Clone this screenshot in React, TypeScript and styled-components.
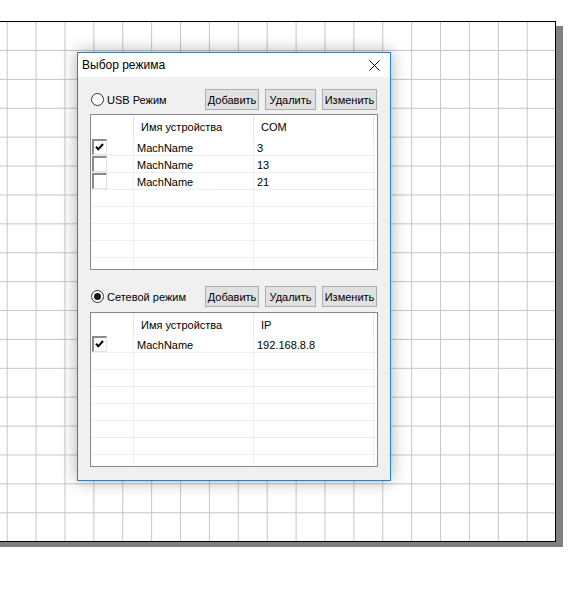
import React from 'react';
import styled, { createGlobalStyle } from 'styled-components';

const GlobalStyle = createGlobalStyle`
  html, body {
    margin: 0;
    padding: 0;
    background: #ffffff;
  }
  body {
    font-family: "Liberation Sans", Arial, sans-serif;
    font-size: 11px;
    color: #000;
  }
  * {
    box-sizing: border-box;
  }
`;

const Page = styled.div`
  width: 569px;
  height: 603px;
  padding-top: 21px;
  overflow: hidden;
`;

const Canvas = styled.div`
  position: relative;
  margin-left: -10px;
  width: 566px;
  height: 521px;
  border: 1px solid #000;
  box-shadow: 7px 5px 0 #808080;
  background-color: #fff;
  background-image:
    linear-gradient(to right, #c6c6c6 1px, transparent 1px),
    linear-gradient(to bottom, #c6c6c6 1px, transparent 1px);
  background-size: 28.9px 28.9px;
  background-position: 15.7px 28px;
`;

const Dialog = styled.div`
  position: absolute;
  left: 86px;
  top: 30px;
  width: 314px;
  height: 429px;
  display: flex;
  flex-direction: column;
  border: 1px solid #1b84d7;
  background: #f0f0f0;
  box-shadow: 0 0 16px rgba(0, 0, 0, 0.32);
`;

const TitleBar = styled.div`
  height: 24px;
  display: flex;
  align-items: center;
  justify-content: space-between;
  padding: 0 10px 0 4px;
  background: #fff;
`;

const Title = styled.span`
  font-size: 12px;
  color: #000;
`;

const CloseButton = styled.span`
  display: flex;
  width: 12px;
  height: 12px;
  align-items: center;
  justify-content: center;
`;

const Body = styled.div`
  flex: 1;
  display: flex;
  flex-direction: column;
  gap: 16px;
  padding: 12px 12px 13px 12px;
`;

const Section = styled.div<{ $gap: number }>`
  display: flex;
  flex-direction: column;
  gap: ${(p) => p.$gap}px;
`;

const ModeRow = styled.div`
  height: 21px;
  display: flex;
  align-items: center;
  justify-content: space-between;
  padding-right: 1px;
`;

const RadioLabel = styled.label`
  display: flex;
  align-items: center;
  gap: 3px;
  padding-left: 1px;
`;

const Radio = styled.span<{ $checked: boolean }>`
  width: 13px;
  height: 13px;
  border-radius: 50%;
  border: 1px solid #333;
  background: #fff;
  display: flex;
  align-items: center;
  justify-content: center;

  &::after {
    content: '';
    display: ${(p) => (p.$checked ? 'block' : 'none')};
    width: 7px;
    height: 7px;
    border-radius: 50%;
    background: #1a1a1a;
  }
`;

const ButtonGroup = styled.div`
  display: flex;
  gap: 6px;
`;

const Button = styled.button<{ $w: number }>`
  width: ${(p) => p.$w}px;
  height: 21px;
  padding: 0;
  border: 1px solid #adadad;
  background: #e1e1e1;
  font-family: "Liberation Sans", Arial, sans-serif;
  font-size: 11px;
  color: #000;
`;

const ListView = styled.div<{ $h: number }>`
  height: ${(p) => p.$h}px;
  border: 1px solid #828790;
  background: #fff;
  overflow: hidden;
`;

const columns = '43px 120px 120px 1fr';

const HeaderRow = styled.div<{ $h: number }>`
  height: ${(p) => p.$h}px;
  display: grid;
  grid-template-columns: ${columns};
`;

const HeaderCell = styled.div`
  display: flex;
  align-items: center;
  padding-left: 7px;
  border-right: 1px solid #e5e5e5;
  &:last-child {
    border-right: none;
  }
`;

const Row = styled.div`
  height: 17px;
  display: grid;
  grid-template-columns: ${columns};
  border-bottom: 1px solid #efefef;
`;

const Cell = styled.div`
  display: flex;
  align-items: center;
  padding: 1px 0 0 3px;
  border-right: 1px solid #efefef;
  white-space: nowrap;
  &:last-child {
    border-right: none;
  }
`;

const CheckCell = styled.div`
  display: flex;
  align-items: center;
  padding-left: 1px;
  border-right: 1px solid #efefef;
`;

const CheckBox = styled.span`
  width: 15px;
  height: 16px;
  background: #fff;
  border-top: 2px solid #8c8c8c;
  border-left: 2px solid #8c8c8c;
  border-right: 1px solid #e3e3e3;
  border-bottom: 1px solid #e3e3e3;
  display: flex;
  padding: 2px 0 0 1px;
`;

type Item = { checked: boolean; name: string; value: string };

const usbItems: Item[] = [
  { checked: true, name: 'MachName', value: '3' },
  { checked: false, name: 'MachName', value: '13' },
  { checked: false, name: 'MachName', value: '21' },
];

const netItems: Item[] = [{ checked: true, name: 'MachName', value: '192.168.8.8' }];

const Check = () => (
  <svg width="9" height="8" viewBox="0 0 9 8">
    <path d="M1 3.8 L3.3 6.3 L8 1" fill="none" stroke="#000" strokeWidth="2" />
  </svg>
);

function DeviceList({ items, column, height, headerHeight }: { items: Item[]; column: string; height: number; headerHeight: number }) {
  const rows: (Item | null)[] = [...items];
  while (rows.length < 8) rows.push(null);
  return (
    <ListView $h={height}>
      <HeaderRow $h={headerHeight}>
        <HeaderCell />
        <HeaderCell>Имя устройства</HeaderCell>
        <HeaderCell>{column}</HeaderCell>
        <HeaderCell />
      </HeaderRow>
      {rows.map((r, i) => (
        <Row key={i}>
          <CheckCell>{r && <CheckBox>{r.checked && <Check />}</CheckBox>}</CheckCell>
          <Cell>{r?.name}</Cell>
          <Cell>{r?.value}</Cell>
          <Cell />
        </Row>
      ))}
    </ListView>
  );
}

function ModeHeader({ label, checked }: { label: string; checked: boolean }) {
  return (
    <ModeRow>
      <RadioLabel>
        <Radio $checked={checked} />
        <span>{label}</span>
      </RadioLabel>
      <ButtonGroup>
        <Button $w={54}>Добавить</Button>
        <Button $w={51}>Удалить</Button>
        <Button $w={55}>Изменить</Button>
      </ButtonGroup>
    </ModeRow>
  );
}

export default function App() {
  return (
    <>
      <GlobalStyle />
      <Page>
        <Canvas>
          <Dialog>
            <TitleBar>
              <Title>Выбор режима</Title>
              <CloseButton>
                <svg width="11" height="11" viewBox="0 0 11 11">
                  <path d="M0.5 0.5 L10.5 10.5 M10.5 0.5 L0.5 10.5" stroke="#000" strokeWidth="1" />
                </svg>
              </CloseButton>
            </TitleBar>
            <Body>
              <Section $gap={4}>
                <ModeHeader label="USB Режим" checked={false} />
                <DeviceList items={usbItems} column="COM" height={156} headerHeight={24} />
              </Section>
              <Section $gap={5}>
                <ModeHeader label="Сетевой режим" checked={true} />
                <DeviceList items={netItems} column="IP" height={155} headerHeight={23} />
              </Section>
            </Body>
          </Dialog>
        </Canvas>
      </Page>
    </>
  );
}
